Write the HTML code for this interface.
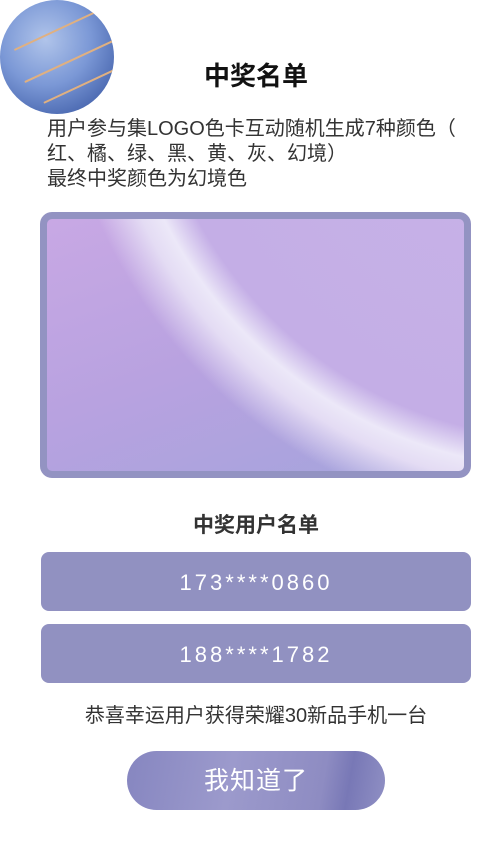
<!DOCTYPE html>
<html><head><meta charset="utf-8"><style>
body{margin:0;width:503px;height:849px;background:#fff;font-family:"Liberation Sans","Noto Sans CJK SC",sans-serif;position:relative;overflow:hidden}
.planet{position:absolute;left:0;top:0;width:114px;height:114px;border-radius:50%;
background:radial-gradient(circle at 40% 35%,#b0c4ea 0%,#7b98d6 45%,#4a68b0 80%,#8a6a5a 100%);overflow:hidden}
.planet i{position:absolute;height:2px;background:#e0b080;border-radius:2px;transform:rotate(-25deg)}
h1{position:absolute;top:56px;left:0;width:512px;text-align:center;margin:0;font-size:26px;font-weight:bold;color:#111}
.p{position:absolute;left:47px;top:117px;font-size:20px;line-height:25px;color:#333;white-space:nowrap}
.img{position:absolute;left:40px;top:212px;width:417px;height:252px;border:7px solid #9393c2;border-radius:12px;overflow:hidden;
background:radial-gradient(circle at 520px -200px,#c8b4e8 0px,#c4aee6 420px,#ece8f8 450px,#e4dcf4 470px,transparent 510px),
linear-gradient(160deg,#c8a8e4 0%,#b8a2e0 50%,#a4a4dc 100%)}
h2{position:absolute;top:509px;left:0;width:512px;text-align:center;margin:0;font-size:21px;font-weight:bold;color:#333}
.b{position:absolute;left:41px;width:430px;height:59px;border-radius:8px;background:#9191c1;color:#fff;font-size:22px;letter-spacing:3px;text-align:center;line-height:62px}
.c{position:absolute;top:699px;left:0;width:512px;text-align:center;font-size:20px;color:#333}
.btn{position:absolute;left:127px;top:751px;width:258px;height:59px;border-radius:30px;background:linear-gradient(100deg,#8686c0,#9c9acc 40%,#8e8cc2 75%,#7878b6 85%,#9090c4);color:#fff;font-size:25px;text-align:center;line-height:60px;letter-spacing:1px}
</style></head><body>
<div class="planet"><i style="left:10px;top:30px;width:90px"></i><i style="left:20px;top:60px;width:100px"></i><i style="left:40px;top:85px;width:80px"></i></div>
<h1>中奖名单</h1>
<div class="p">用户参与集LOGO色卡互动随机生成7种颜色（<br>红、橘、绿、黑、黄、灰、幻境）<br>最终中奖颜色为幻境色</div>
<div class="img"></div>
<h2>中奖用户名单</h2>
<div class="b" style="top:552px">173****0860</div>
<div class="b" style="top:624px">188****1782</div>
<div class="c">恭喜幸运用户获得荣耀30新品手机一台</div>
<div class="btn">我知道了</div>
</body></html>
